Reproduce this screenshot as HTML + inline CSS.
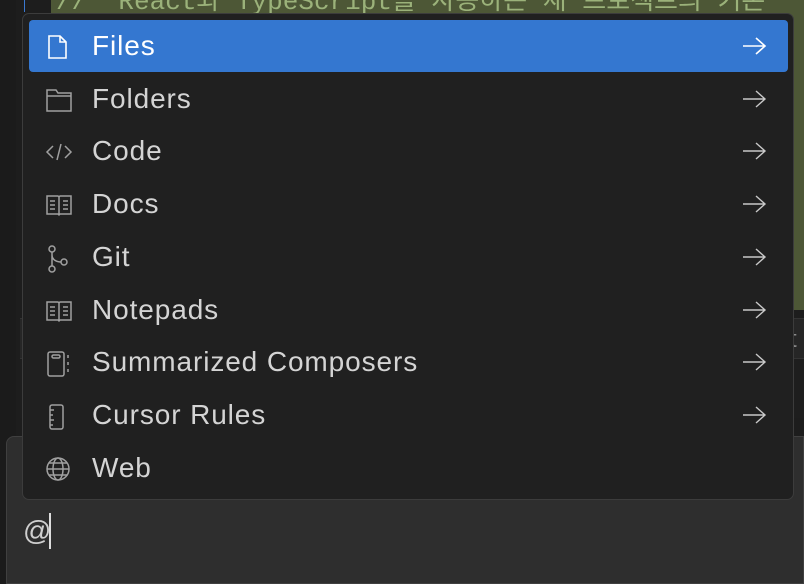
<!DOCTYPE html>
<html><head><meta charset="utf-8"><style>
*{margin:0;padding:0;box-sizing:border-box}
body{width:804px;height:584px;overflow:hidden;background:#1a1a1a;position:relative;font-family:"Liberation Sans","Noto Sans CJK KR",sans-serif}
.abs{position:absolute}
.menu{left:22px;top:13px;width:772px;height:487px;background:#202020;border:1px solid #3c3c3c;border-radius:7px}
.row{position:absolute;left:6px;width:759px;height:52px;color:#d4d4d4;font-size:28px;letter-spacing:0.9px}
.row.sel{background:#3477d0;border-radius:4px;color:#fff}
.row .t{position:absolute;left:63px;top:10px;line-height:32px}
.row svg.i{position:absolute;left:16px;top:14px}
.row svg.a{position:absolute;left:712px;top:15px}
</style></head><body>
<div class="abs" style="left:0;top:0;width:16px;height:584px;background:#1b1b1b"></div>
<div class="abs" style="left:16px;top:0;width:788px;height:584px;background:#1d1d1d"></div>
<div class="abs" style="left:24px;top:0;width:1px;height:12px;background:#3a78d0"></div>
<div class="abs" style="left:51px;top:0;width:753px;height:310px;background:#4d5736"></div>
<div class="abs" style="left:56px;top:-20px;color:#9bb27a;font-family:'Liberation Mono','Noto Sans CJK KR',monospace;font-size:26px;white-space:nowrap">// "React와 TypeScript를 사용하는 새 프로젝트의 기본</div>
<div class="abs" style="left:20px;top:318px;width:784px;height:40px;background:#262626;border-top:1px solid #333"></div>
<div class="abs" style="left:790px;top:326px;color:#8a8a8a;font-size:24px">t</div>
<div class="abs" style="left:20px;top:358px;width:784px;height:60px;background:#1e1e1e;border-top:1px solid #333"></div>
<div class="abs" style="left:6px;top:436px;width:798px;height:148px;background:#2e2e2e;border:1px solid #404040;border-radius:8px 0 0 0"></div>
<div class="abs" style="left:23px;top:514px;color:#cfcfcf;font-size:28px;line-height:34px">@</div>
<div class="abs" style="left:49px;top:513px;width:2px;height:36px;background:#ddd"></div>

<div class="abs menu">
<div class="row sel" style="top:6px"><svg class="i" width="26" height="26" viewBox="0 0 26 26" fill="none" stroke="#fff" stroke-width="1.6"><path d="M4 2h11l6 6v16H4z M15 2v6h6"/></svg><span class="t">Files</span><svg class="a" width="26" height="22" viewBox="0 0 26 22" fill="none" stroke="#fff" stroke-width="1.6"><path d="M2 11h22M15 3l9 8-9 8"/></svg></div>
<div class="row" style="top:59px"><svg class="i" width="28" height="26" viewBox="0 0 28 26" fill="none" stroke="#a0a0a0" stroke-width="1.5"><path d="M2 3h9l2 3h13v18H2z M2 9h24"/></svg><span class="t">Folders</span><svg class="a" width="26" height="22" viewBox="0 0 26 22" fill="none" stroke="#c8c8c8" stroke-width="1.4"><path d="M2 11h22M15 3l9 8-9 8"/></svg></div>
<div class="row" style="top:111px"><svg class="i" width="28" height="26" viewBox="0 0 28 26" fill="none" stroke="#a0a0a0" stroke-width="1.5"><path d="M8 7l-6 6 6 6M20 7l6 6-6 6M16 5l-4 16"/></svg><span class="t">Code</span><svg class="a" width="26" height="22" viewBox="0 0 26 22" fill="none" stroke="#c8c8c8" stroke-width="1.4"><path d="M2 11h22M15 3l9 8-9 8"/></svg></div>
<div class="row" style="top:164px"><svg class="i" width="28" height="26" viewBox="0 0 28 26" fill="none" stroke="#a0a0a0" stroke-width="1.5"><path d="M2 4h11l1 1 1-1h11v18H15l-1 1-1-1H2z M14 5v17 M5 9h5M5 13h5M5 17h5M18 9h5M18 13h5M18 17h5"/></svg><span class="t">Docs</span><svg class="a" width="26" height="22" viewBox="0 0 26 22" fill="none" stroke="#c8c8c8" stroke-width="1.4"><path d="M2 11h22M15 3l9 8-9 8"/></svg></div>
<div class="row" style="top:217px"><svg class="i" width="28" height="28" viewBox="0 0 28 28" fill="none" stroke="#a0a0a0" stroke-width="1.5"><circle cx="7" cy="4" r="3"/><circle cx="7" cy="24" r="3"/><circle cx="19" cy="17" r="3"/><path d="M7 7v14M7 10c0 5 5 7 9 7"/></svg><span class="t">Git</span><svg class="a" width="26" height="22" viewBox="0 0 26 22" fill="none" stroke="#c8c8c8" stroke-width="1.4"><path d="M2 11h22M15 3l9 8-9 8"/></svg></div>
<div class="row" style="top:270px"><svg class="i" width="28" height="26" viewBox="0 0 28 26" fill="none" stroke="#a0a0a0" stroke-width="1.5"><path d="M2 4h11l1 1 1-1h11v18H15l-1 1-1-1H2z M14 5v17 M5 9h5M5 13h5M5 17h5M18 9h5M18 13h5M18 17h5"/></svg><span class="t">Notepads</span><svg class="a" width="26" height="22" viewBox="0 0 26 22" fill="none" stroke="#c8c8c8" stroke-width="1.4"><path d="M2 11h22M15 3l9 8-9 8"/></svg></div>
<div class="row" style="top:322px"><svg class="i" width="28" height="28" viewBox="0 0 28 28" fill="none" stroke="#a0a0a0" stroke-width="1.5"><rect x="3" y="2" width="16" height="24" rx="2"/><rect x="7" y="5" width="8" height="3" rx="1.5"/><path d="M23 5v3M23 12v3M23 19v3"/></svg><span class="t">Summarized Composers</span><svg class="a" width="26" height="22" viewBox="0 0 26 22" fill="none" stroke="#c8c8c8" stroke-width="1.4"><path d="M2 11h22M15 3l9 8-9 8"/></svg></div>
<div class="row" style="top:375px"><svg class="i" width="28" height="28" viewBox="0 0 28 28" fill="none" stroke="#a0a0a0" stroke-width="1.5"><rect x="5" y="2" width="13" height="24" rx="2"/><path d="M5 7h4M5 12h3M5 17h4M5 22h3"/></svg><span class="t">Cursor Rules</span><svg class="a" width="26" height="22" viewBox="0 0 26 22" fill="none" stroke="#c8c8c8" stroke-width="1.4"><path d="M2 11h22M15 3l9 8-9 8"/></svg></div>
<div class="row" style="top:428px"><svg class="i" width="28" height="28" viewBox="0 0 28 28" fill="none" stroke="#a0a0a0" stroke-width="1.5"><circle cx="13" cy="13" r="11"/><ellipse cx="13" cy="13" rx="5" ry="11"/><path d="M2 13h22M4 7h18M4 19h18"/></svg><span class="t">Web</span></div>
</div>
</body></html>
